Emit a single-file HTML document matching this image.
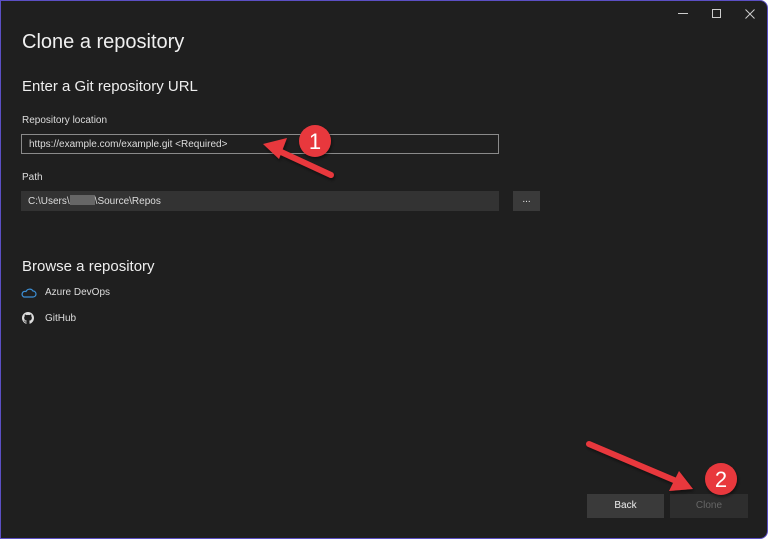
<!DOCTYPE html>
<html><head><meta charset="utf-8"><style>
*{margin:0;padding:0;box-sizing:border-box}
html,body{width:768px;height:539px;overflow:hidden;background:#fff}
.win{position:absolute;left:0;top:0;width:768px;height:539px;background:#1f1f1f;border:1px solid #5b4fc4;border-radius:0 8px 8px 0;font-family:"Liberation Sans",sans-serif;color:#e6e6e6}
.t{position:absolute;white-space:nowrap}
.box{position:absolute;height:20px;font-size:10px;line-height:19px;padding-left:7px;color:#ddd}
.btn{position:absolute;height:24px;font-size:10px;line-height:24px;text-align:center;background:#3a3a3a}
</style></head><body>
<div class="win">
<div class="t" style="left:21px;top:30px;font-size:20px;color:#f0f0f0">Clone a repository</div>
<div class="t" style="left:21px;top:77px;font-size:15px;color:#eee">Enter a Git repository URL</div>
<div class="t" style="left:21px;top:114px;font-size:10px;color:#ddd">Repository location</div>
<div class="box" style="left:20px;top:133px;width:478px;border:1px solid #8a8a8a;background:#1f1f1f">https://example.com/example.git &lt;Required&gt;</div>
<div class="t" style="left:21px;top:171px;font-size:10px;color:#ddd">Path</div>
<div class="box" style="left:20px;top:190px;width:478px;background:#333;line-height:21px">C:\Users\<span style="display:inline-block;width:25px;height:10px;background:#666;vertical-align:-1px"></span>\Source\Repos</div>
<div class="btn" style="left:512px;top:190px;width:27px;height:20px;line-height:18px;background:#3a3a3a">...</div>
<div class="t" style="left:21px;top:257px;font-size:15px;color:#eee">Browse a repository</div>
<svg class="t" style="left:20px;top:286px" width="16" height="12" viewBox="0 0 16 12"><path d="M3 10 H12 A3 3 0 0 0 12 4 A4 4 0 0 0 5 4.5 A2.8 2.8 0 0 0 3 10Z" fill="none" stroke="#3c8fd6" stroke-width="1.2"/></svg>
<div class="t" style="left:44px;top:286px;font-size:10px;color:#ddd">Azure DevOps</div>
<svg class="t" style="left:21px;top:311px" width="12" height="12" viewBox="0 0 16 16"><path fill="#ddd" d="M8 0C3.58 0 0 3.58 0 8c0 3.54 2.290 6.53 5.47 7.59.4.07.55-.17.55-.38v-1.33c-2.23.48-2.7-1.07-2.7-1.070-.36-.92-.89-1.17-.89-1.17-.73-.5.06-.49.06-.49.8.06 1.23.83 1.23.83.72 1.22 1.87.87 2.33.66.07-.52.28-.87.5-1.07-1.78-.2-3.64-.89-3.64-3.95 0-.87.31-1.59.82-2.15-.08-.2-.36-1.02.08-2.12 0 0 .67-.21 2.2.82a7.6 7.6 0 0 1 4 0c1.53-1.04 2.2-.82 2.2-.82.44 1.1.16 1.92.08 2.12.51.56.82 1.27.82 2.15 0 3.07-1.87 3.75-3.65 3.95.29.25.54.73.54 1.48v2.2c0 .21.15.46.55.38A8 8 0 0 0 16 8c0-4.42-3.58-8-8-8z"/></svg>
<div class="t" style="left:44px;top:312px;font-size:10px;color:#ddd">GitHub</div>
<div class="btn" style="left:586px;top:493px;width:77px;color:#eee">Back</div>
<div class="btn" style="left:669px;top:493px;width:78px;background:#2e2e2e;color:#666">Clone</div>
<div class="t" style="left:677px;top:12px;width:10px;height:1px;background:#ccc"></div>
<div class="t" style="left:711px;top:8px;width:9px;height:9px;border:1px solid #ccc"></div>
<svg class="t" style="left:744px;top:8px" width="10" height="10"><path d="M0.5 0.5L9.5 9.5M9.5 0.5L0.5 9.5" stroke="#ccc" stroke-width="1"/></svg>
<svg class="t" style="left:0;top:0" width="768" height="539">
<defs><filter id="s"><feDropShadow dx="1" dy="2" stdDeviation="1.5" flood-opacity=".5"/></filter></defs>
<g filter="url(#s)" fill="#e8383d">
<path d="M330 174 L278 150" stroke="#e8383d" stroke-width="6" stroke-linecap="round"/>
<path d="M262 143 L286 137 L278 158Z"/>
<circle cx="314" cy="140" r="16"/>
<path d="M588 443 L680 482" stroke="#e8383d" stroke-width="6" stroke-linecap="round"/>
<path d="M692 488 L668 490 L678 470Z"/>
<circle cx="720" cy="478" r="16"/>
</g>
<text x="314" y="148" font-family="Liberation Sans" font-size="22" fill="#fff" text-anchor="middle">1</text>
<text x="720" y="486" font-family="Liberation Sans" font-size="22" fill="#fff" text-anchor="middle">2</text>
</svg>
</div>
</body></html>
